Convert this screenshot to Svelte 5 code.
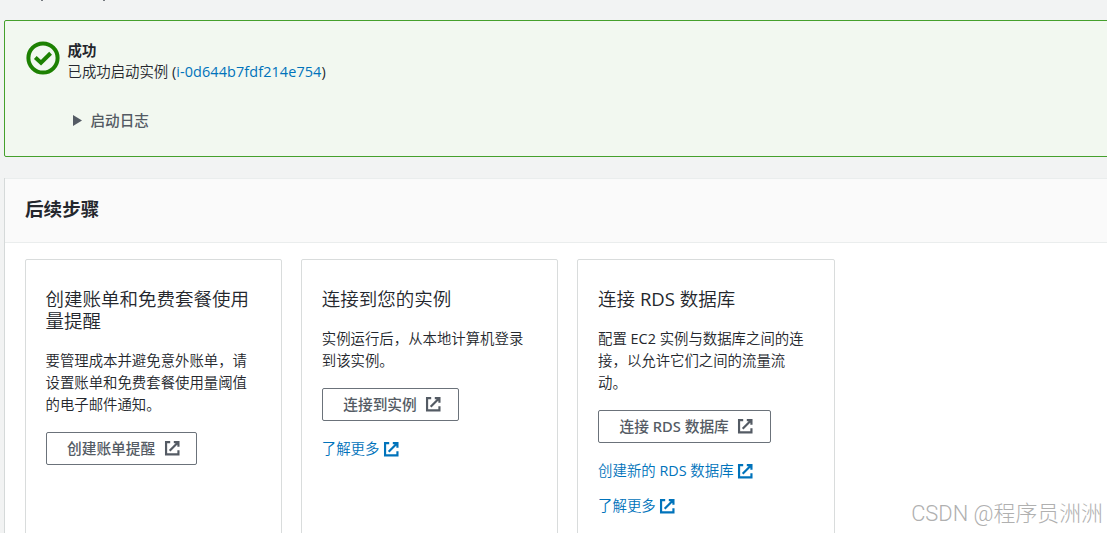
<script lang="ts">
	const instanceId = 'i-0d644b7fdf214e754';

	const steps = [
		{
			title: '创建账单和免费套餐使用量提醒',
			text: '要管理成本并避免意外账单，请设置账单和免费套餐使用量阈值的电子邮件通知。',
			button: '创建账单提醒',
			links: []
		},
		{
			title: '连接到您的实例',
			text: '实例运行后，从本地计算机登录到该实例。',
			button: '连接到实例',
			links: ['了解更多']
		},
		{
			title: '连接 RDS 数据库',
			text: '配置 EC2 实例与数据库之间的连接，以允许它们之间的流量流动。',
			button: '连接 RDS 数据库',
			links: ['创建新的 RDS 数据库', '了解更多']
		}
	];
</script>

{#snippet external()}
	<svg class="external" viewBox="0 0 16 16" aria-hidden="true">
		<path d="M6 2H2v12h12V10M9.5 2H14v4.5M5.5 10.5L13.5 2.5" />
	</svg>
{/snippet}

<div class="page">
	<div class="crumbs"><i></i><i></i></div>

	<section class="alert">
		<svg class="success" viewBox="0 0 34 34" aria-hidden="true">
			<circle cx="17" cy="17" r="14.6" />
			<path d="M9.3 16.5l5.7 5.2 9.6-9.4" />
		</svg>
		<div>
			<h2>成功</h2>
			<p>已成功启动实例 (<a class="instance" href="#instance">{instanceId}</a>)</p>
			<div class="log">
				<svg viewBox="0 0 9 11" aria-hidden="true"><path d="M0 0l9 5.5L0 11z" /></svg>
				<span>启动日志</span>
			</div>
		</div>
	</section>

	<section class="panel">
		<header><h1>后续步骤</h1></header>
		<div class="cards">
			{#each steps as step}
				<article class="card">
					<h3>{step.title}</h3>
					<p>{step.text}</p>
					<button>{step.button}{@render external()}</button>
					{#each step.links as link}
						<a class="more" href="#more">{link}{@render external()}</a>
					{/each}
				</article>
			{/each}
		</div>
	</section>

	<div class="watermark">CSDN @程序员洲洲</div>
</div>

<style>
	:global(body) {
		margin: 0;
		overflow: hidden;
	}

	.page {
		position: relative;
		display: flex;
		flex-direction: column;
		width: 1107px;
		height: 533px;
		overflow: hidden;
		box-sizing: border-box;
		padding-left: 4px;
		background: #f2f3f3;
		color: #24272d;
		font: 400 14.4px/22px "Open Sans", "Noto Sans CJK SC DemiLight", "Noto Sans CJK SC", sans-serif;
	}

	h1, h2, h3, p {
		margin: 0;
	}

	a {
		color: #0073bb;
		text-decoration: none;
	}

	.crumbs {
		display: flex;
		gap: 60px;
		flex: none;
		height: 20px;
		padding-left: 37px;
	}

	.crumbs i {
		width: 2px;
		height: 1px;
		background: #777b80;
	}

	.alert {
		display: flex;
		flex: none;
		gap: 7.5px;
		box-sizing: border-box;
		height: 137px;
		margin-right: -4px;
		padding: 18px 21px;
		border: 1px solid #45a02c;
		border-radius: 2px;
		background: #f2f8f0;
	}

	.success {
		width: 34px;
		height: 34px;
		margin-top: 2px;
		fill: none;
		stroke: #1d8102;
		stroke-width: 4;
	}

	.alert h2 {
		font-family: "Noto Sans CJK SC", sans-serif;
		font-size: 14.4px;
		line-height: 21px;
	}

	.alert p {
		margin-top: 1px;
	}

	.instance {
		letter-spacing: 0.12px;
	}

	.log {
		display: flex;
		align-items: center;
		gap: 9px;
		margin: 26px 0 0 5px;
		color: #545b64;
		font-family: "Noto Sans CJK SC", sans-serif;
		font-size: 14.6px;
		font-weight: 500;
	}

	.log svg {
		width: 9px;
		height: 11px;
		fill: #545b64;
	}

	.panel {
		flex: 1;
		margin-top: 21px;
		border-left: 1px solid #d5d9d9;
		background: #fff;
	}

	header {
		box-sizing: border-box;
		height: 65px;
		padding: 18px 20px 0;
		border-top: 1px solid #eaeded;
		border-bottom: 1px solid #eaeded;
		background: #fafafa;
	}

	h1 {
		font-family: "Noto Sans CJK SC", sans-serif;
		font-size: 18.6px;
		line-height: 22px;
	}

	.cards {
		display: grid;
		grid-template-columns: repeat(3, 257.5px);
		gap: 18.8px;
		padding: 16px 0 0 19.5px;
	}

	.card {
		display: flex;
		flex-direction: column;
		align-items: flex-start;
		box-sizing: border-box;
		height: 320px;
		padding: 28px 20px;
		border: 1px solid #d9dcdc;
		border-radius: 2px;
	}

	h3 {
		font-size: 18.5px;
		font-weight: 400;
		line-height: 22px;
	}

	.card p {
		width: 208px;
		margin-top: 18px;
	}

	button {
		display: flex;
		align-items: center;
		gap: 8.5px;
		box-sizing: border-box;
		height: 33px;
		margin-top: 16.4px;
		padding: 0 16px 1px 20.5px;
		border: 1px solid #6b727a;
		border-radius: 2px;
		background: #fff;
		color: #545b64;
		font: 500 14.7px/22px "Noto Sans", "Noto Sans CJK SC", sans-serif;
	}

	.external {
		width: 16.5px;
		height: 16.5px;
		fill: none;
		stroke: currentColor;
		stroke-width: 2.1;
	}

	.more {
		display: flex;
		align-items: center;
		gap: 3.5px;
		margin-top: 13px;
	}

	button + .more {
		margin-top: 16.6px;
	}

	.watermark {
		position: absolute;
		right: 4px;
		bottom: 3px;
		color: #b0b0b0;
		font: 300 21.9px/32px Roboto, "Noto Sans CJK SC", sans-serif;
	}
</style>
